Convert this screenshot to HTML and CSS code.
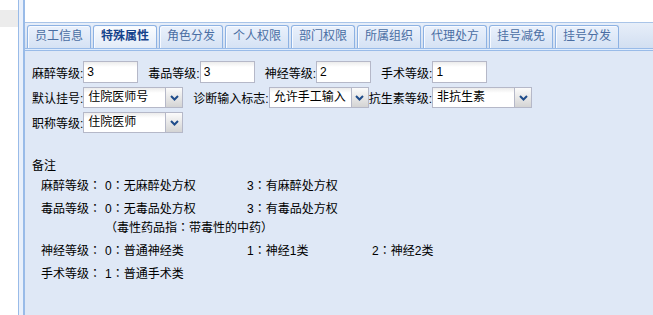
FILE: index.html
```html
<!DOCTYPE html>
<html lang="zh-CN">
<head>
<meta charset="utf-8">
<title>特殊属性</title>
<link rel="stylesheet" href="styles.css">
</head>
<body>
<div class="page">
  <div class="side"><div class="side-band"></div></div>
  <div class="frame">
    <div class="panel">
      <div class="top"></div>
      <div class="tabbar">
        <div class="tab">员工信息</div>
        <div class="tab active">特殊属性</div>
        <div class="tab">角色分发</div>
        <div class="tab">个人权限</div>
        <div class="tab">部门权限</div>
        <div class="tab">所属组织</div>
        <div class="tab">代理处方</div>
        <div class="tab">挂号减免</div>
        <div class="tab">挂号分发</div>
      </div>
      <div class="spacer"></div>
      <div class="body">
        <div class="row r1">
          <span class="lbl">麻醉等级:</span><input class="txt" type="text" value="3">
          <span class="lbl gap">毒品等级:</span><input class="txt" type="text" value="3">
          <span class="lbl gap">神经等级:</span><input class="txt" type="text" value="2">
          <span class="lbl gap">手术等级:</span><input class="txt" type="text" value="1">
        </div>
        <div class="row r2">
          <span class="lbl">默认挂号:</span>
          <div class="combo"><span class="combo-text">住院医师号</span><span class="trigger"><svg width="9" height="6" viewBox="0 0 9 6"><path d="M1 1 L4.5 4.5 L8 1" fill="none" stroke="#1f4c8a" stroke-width="2"/></svg></span></div>
          <span class="lbl gap">诊断输入标志:</span>
          <div class="combo"><span class="combo-text">允许手工输入</span><span class="trigger"><svg width="9" height="6" viewBox="0 0 9 6"><path d="M1 1 L4.5 4.5 L8 1" fill="none" stroke="#1f4c8a" stroke-width="2"/></svg></span></div>
          <span class="lbl">抗生素等级:</span>
          <div class="combo"><span class="combo-text">非抗生素</span><span class="trigger"><svg width="9" height="6" viewBox="0 0 9 6"><path d="M1 1 L4.5 4.5 L8 1" fill="none" stroke="#1f4c8a" stroke-width="2"/></svg></span></div>
        </div>
        <div class="row r3">
          <span class="lbl">职称等级:</span>
          <div class="combo"><span class="combo-text">住院医师</span><span class="trigger"><svg width="9" height="6" viewBox="0 0 9 6"><path d="M1 1 L4.5 4.5 L8 1" fill="none" stroke="#1f4c8a" stroke-width="2"/></svg></span></div>
        </div>

        <div class="notes-title">备注</div>
        <div class="notes">
          <div class="nrow"><span>麻醉等级<span class="fc" lang="zh-Hant">：</span></span><span>0<span class="fc" lang="zh-Hant">：</span>无麻醉处方权</span><span>3<span class="fc" lang="zh-Hant">：</span>有麻醉处方权</span></div>
          <div class="nrow"><span>毒品等级<span class="fc" lang="zh-Hant">：</span></span><span>0<span class="fc" lang="zh-Hant">：</span>无毒品处方权</span><span>3<span class="fc" lang="zh-Hant">：</span>有毒品处方权</span></div>
          <div class="nrow sub"><span></span><span class="wide">（毒性药品指<span class="fc" lang="zh-Hant">：</span>带毒性的中药）</span></div>
          <div class="nrow"><span>神经等级<span class="fc" lang="zh-Hant">：</span></span><span>0<span class="fc" lang="zh-Hant">：</span>普通神经类</span><span>1<span class="fc" lang="zh-Hant">：</span>神经1类</span><span>2<span class="fc" lang="zh-Hant">：</span>神经2类</span></div>
          <div class="nrow"><span>手术等级<span class="fc" lang="zh-Hant">：</span></span><span>1<span class="fc" lang="zh-Hant">：</span>普通手术类</span></div>
        </div>
      </div>
    </div>
  </div>
</div>
</body>
</html>
```
FILE: styles.css
```css
html, body {
  margin: 0;
  background: #fff;
}
body {
  font: 12px "Liberation Sans", "Noto Sans CJK SC", sans-serif;
  color: #000;
}
.page {
  display: flex;
  height: 315px;
  overflow: hidden;
}
.side {
  width: 18px;
  flex: none;
}
.side-band {
  margin-top: 10px;
  height: 17px;
  background: #ececec;
}
.frame {
  flex: 1;
  display: flex;
  min-width: 0;
  border-left: 1px solid #99bbe8;
  background: #e9f0fb;
  padding-left: 4px;
}
.panel {
  flex: 1;
  min-width: 0;
  display: flex;
  flex-direction: column;
  border-left: 2px solid #99bbe8;
  background: #fff;
}
.top {
  height: 22px;
  background: #fff;
}
.tabbar {
  height: 25px;
  display: flex;
  align-items: flex-end;
  padding-left: 2px;
  border-top: 1px solid #a9c4e8;
  border-bottom: 1px solid #99bbe8;
  background: linear-gradient(#e7eef9, #d2dff1);
}
.tab {
  flex: none;
  box-sizing: border-box;
  width: 64px;
  height: 23px;
  margin-right: 2px;
  border: 1px solid #8db2e3;
  border-bottom: none;
  border-radius: 3px 3px 0 0;
  background: linear-gradient(#eaf1fc, #d5e2f4);
  box-shadow: inset 1px 1px 0 #f7faff;
  color: #4a6ea3;
  text-align: center;
  line-height: 21px;
  white-space: nowrap;
}
.tab.active {
  background: linear-gradient(#fbfdff, #e2ebf8);
  color: #15428b;
  font-weight: bold;
}
.spacer {
  height: 1px;
  background: #deecfd;
  border-bottom: 1px solid #99bbe8;
}
.body {
  flex: 1;
  background: #dfe8f6;
  padding: 10px 0 0 7px;
}
.row {
  display: flex;
  align-items: center;
  white-space: nowrap;
}
.r1 { height: 22px; }
.r2 { height: 21px; margin-top: 4px; }
.r3 { height: 21px; margin-top: 4px; }
.lbl {
  flex: none;
}
.lbl.gap {
  margin-left: 10px;
}
.txt {
  box-sizing: border-box;
  width: 55px;
  height: 22px;
  margin: 0;
  padding: 0 3px;
  border: 1px solid #b5b8c8;
  background: linear-gradient(#ececec, #fff 5px);
  font: 12px "Liberation Sans", "Noto Sans CJK SC", sans-serif;
  color: #000;
  outline: none;
}
.combo {
  flex: none;
  box-sizing: border-box;
  width: 100px;
  height: 21px;
  display: flex;
  border: 1px solid #b5b8c8;
  background: linear-gradient(#ececec, #fff 5px);
}
.combo-text {
  flex: 1;
  padding-left: 4px;
  line-height: 19px;
  overflow: hidden;
}
.trigger {
  flex: none;
  width: 16px;
  border-left: 1px solid #b5b8c8;
  background: linear-gradient(#fbfbfb, #d4d4d4);
  display: flex;
  align-items: center;
  justify-content: center;
}
.notes-title {
  margin-top: 23px;
  line-height: 20px;
}
.notes {
  margin-left: 9px;
}
.nrow {
  display: grid;
  grid-template-columns: 64px 142px 125px auto;
  line-height: 17px;
  white-space: nowrap;
}
.nrow + .nrow {
  margin-top: 4px;
}
.nrow + .nrow.sub {
  margin-top: 0;
}
.nrow .wide {
  grid-column: 2 / span 3;
}
.fc {
  font-family: "Noto Sans CJK TC", "Noto Sans CJK SC", sans-serif;
}
```
